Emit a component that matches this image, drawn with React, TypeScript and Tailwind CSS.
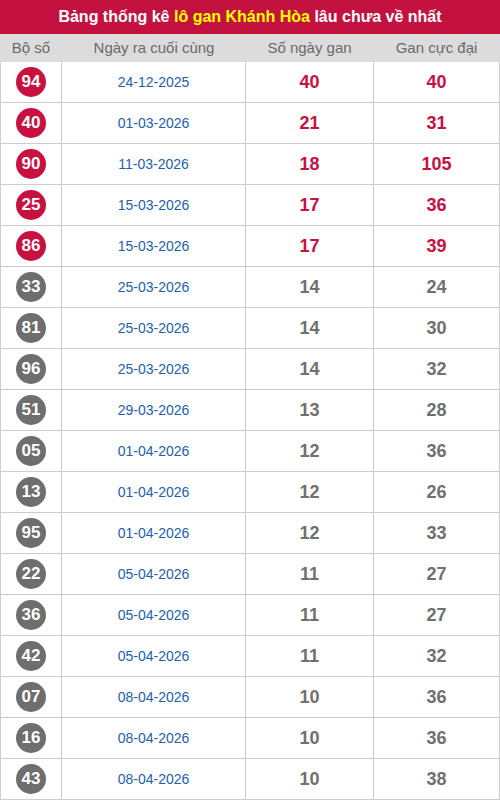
const ROWS: [string, string, number, number][] = [
  ['94', '24-12-2025', 40, 40],
  ['40', '01-03-2026', 21, 31],
  ['90', '11-03-2026', 18, 105],
  ['25', '15-03-2026', 17, 36],
  ['86', '15-03-2026', 17, 39],
  ['33', '25-03-2026', 14, 24],
  ['81', '25-03-2026', 14, 30],
  ['96', '25-03-2026', 14, 32],
  ['51', '29-03-2026', 13, 28],
  ['05', '01-04-2026', 12, 36],
  ['13', '01-04-2026', 12, 26],
  ['95', '01-04-2026', 12, 33],
  ['22', '05-04-2026', 11, 27],
  ['36', '05-04-2026', 11, 27],
  ['42', '05-04-2026', 11, 32],
  ['07', '08-04-2026', 10, 36],
  ['16', '08-04-2026', 10, 36],
  ['43', '08-04-2026', 10, 38],
];

export default function App() {
  return (
    <div className="w-[500px] bg-white font-['Liberation_Sans',Arial,sans-serif]">
      <div className="flex h-[34px] items-center justify-center bg-[#c41240] text-[16px] font-bold text-white">
        Bảng thống kê&nbsp;<span className="text-[#ffff00]">lô gan Khánh Hòa</span>&nbsp;lâu chưa về nhất
      </div>
      <div className="flex h-[28px] items-center bg-[#dcdcdc] text-[15px] text-[#6a6a6a]">
        <div className="w-[62px] text-center">Bộ số</div>
        <div className="w-[184px] text-center">Ngày ra cuối cùng</div>
        <div className="w-[127px] text-center">Số ngày gan</div>
        <div className="flex-1 text-center">Gan cực đại</div>
      </div>
      {ROWS.map(([so, ngay, gan, max], i) => {
        const hot = i < 5;
        const num = hot ? 'text-[#c8113f]' : 'text-[#707070]';
        return (
          <div key={so} className="flex h-[41px] border-b border-[#cccccc]">
            <div className="flex w-[61px] items-center justify-center border-l border-[#cccccc]">
              <span
                className={`flex h-[30px] w-[30px] items-center justify-center rounded-full text-[17px] font-bold text-white ${
                  hot ? 'bg-[#c8113f]' : 'bg-[#6e6e6e]'
                }`}
              >
                {so}
              </span>
            </div>
            <div className="flex w-[184px] items-center justify-center border-l border-[#cccccc] text-[14px] text-[#1c5fae]">
              {ngay}
            </div>
            <div className={`flex w-[128px] items-center justify-center border-l border-[#cccccc] text-[18px] font-bold ${num}`}>
              {gan}
            </div>
            <div className={`flex flex-1 items-center justify-center border-x border-[#cccccc] text-[18px] font-bold ${num}`}>
              {max}
            </div>
          </div>
        );
      })}
    </div>
  );
}
